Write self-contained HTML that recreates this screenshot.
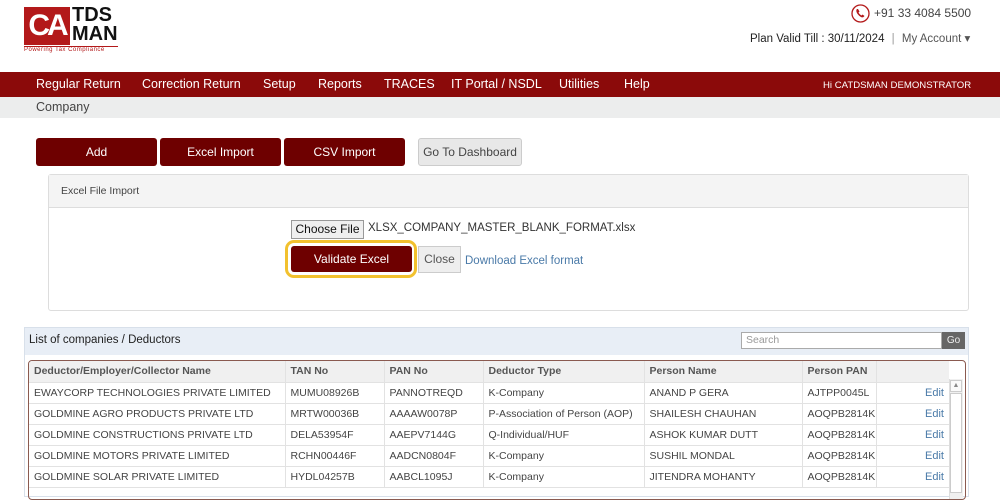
<!DOCTYPE html>
<html><head><style>
*{margin:0;padding:0;box-sizing:border-box}
body{width:1000px;height:485px;overflow:hidden;background:#fff;font-family:"Liberation Sans",sans-serif;position:relative;color:#333}
.a{position:absolute}
.btn{position:absolute;background:#6e0000;color:#fff;font-size:12px;text-align:center;border-radius:3px;line-height:28px}
.n{position:absolute;top:77px;font-size:12.5px;color:#fff;white-space:nowrap}
td{font-size:10.5px;color:#444;height:21px;border-bottom:1px solid #e2e2e2;border-right:1px solid #e2e2e2;padding-left:5px;white-space:nowrap}
</style></head><body>
<!-- logo -->
<div class="a" style="left:24px;top:7px;width:46px;height:38px;background:#b3191a;color:#fff;font-size:30px;font-weight:bold;line-height:38px;text-align:center;letter-spacing:-3px">CA</div>
<div class="a" style="left:72px;top:6px;font-size:20px;font-weight:bold;line-height:19px;color:#111">TDS<br>MAN</div>
<div class="a" style="left:24px;top:46px;width:94px;border-top:1px solid #b3191a"></div>
<div class="a" style="left:24px;top:47px;font-size:6px;color:#b3191a;letter-spacing:.5px">Powering Tax Compliance</div>
<!-- top right -->
<svg class="a" style="left:851px;top:4px" width="19" height="19" viewBox="0 0 19 19"><circle cx="9.5" cy="9.5" r="8.5" fill="none" stroke="#b3191a" stroke-width="1.3"/><path d="M6 5c-1 1-1 3 1 5.5s4.5 3.5 5.5 2.5l1-1-2-1.5-1 1c-1-.5-2.5-2-3-3l1-1L7 5z" fill="#b3191a"/></svg>
<div class="a" style="left:874px;top:6px;font-size:12px;color:#444">+91 33 4084 5500</div>
<div class="a" style="left:750px;top:31px;font-size:11.5px;color:#222;white-space:nowrap">Plan Valid Till : 30/11/2024 <span style="color:#999;margin:0 4px">|</span> <span style="color:#555">My Account ▾</span></div>
<!-- nav -->
<div class="a" style="left:0;top:72px;width:1000px;height:25px;background:#8b0a0a"></div>
<div class="n" style="left:36px">Regular Return</div>
<div class="n" style="left:142px">Correction Return</div>
<div class="n" style="left:263px">Setup</div>
<div class="n" style="left:318px">Reports</div>
<div class="n" style="left:384px">TRACES</div>
<div class="n" style="left:451px">IT Portal / NSDL</div>
<div class="n" style="left:559px">Utilities</div>
<div class="n" style="left:624px">Help</div>
<div class="a" style="left:823px;top:80px;font-size:9.6px;color:#fff;white-space:nowrap">Hi CATDSMAN DEMONSTRATOR</div>
<div class="a" style="left:0;top:97px;width:1000px;height:21px;background:#eceded"></div>
<div class="a" style="left:36px;top:100px;font-size:12.5px;color:#444">Company</div>
<!-- buttons -->
<div class="btn" style="left:36px;top:138px;width:121px">Add</div>
<div class="btn" style="left:160px;top:138px;width:121px">Excel Import</div>
<div class="btn" style="left:284px;top:138px;width:121px">CSV Import</div>
<div class="btn" style="left:418px;top:138px;width:104px;background:#e8e8e8;color:#444;border:1px solid #ccc;line-height:26px">Go To Dashboard</div>
<!-- import panel -->
<div class="a" style="left:48px;top:174px;width:921px;height:137px;border:1px solid #ddd;border-radius:3px"></div>
<div class="a" style="left:49px;top:175px;width:919px;height:33px;background:#f4f4f4;border-bottom:1px solid #ddd"></div>
<div class="a" style="left:61px;top:185px;font-size:10.5px;color:#444">Excel File Import</div>
<div class="a" style="left:291px;top:220px;width:73px;height:19px;border:1px solid #999;background:#efefef;font-size:12px;text-align:center;line-height:17px;color:#111">Choose File</div>
<div class="a" style="left:368px;top:222px;font-size:11.5px;color:#333">XLSX_COMPANY_MASTER_BLANK_FORMAT.xlsx</div>
<div class="a" style="left:285px;top:240px;width:132px;height:38px;border:3px solid #f2c12e;border-radius:9px"></div>
<div class="btn" style="left:291px;top:246px;width:121px;height:26px;line-height:26px">Validate Excel</div>
<div class="a" style="left:418px;top:246px;width:43px;height:27px;background:#eee;border:1px solid #ccc;font-size:12px;text-align:center;line-height:25px;color:#555">Close</div>
<div class="a" style="left:465px;top:255px;font-size:11.5px;color:#4a7aa8">Download Excel format</div>
<!-- list panel -->
<div class="a" style="left:24px;top:327px;width:945px;height:170px;border:1px solid #d8e0ea"></div>
<div class="a" style="left:25px;top:328px;width:943px;height:27px;background:#e8eef6"></div>
<div class="a" style="left:29px;top:334px;font-size:11.5px;color:#222">List of companies / Deductors</div>
<div class="a" style="left:741px;top:332px;width:201px;height:17px;border:1px solid #aaa;background:#fff;font-size:10.5px;color:#999;padding-left:4px;line-height:15px">Search</div>
<div class="a" style="left:942px;top:332px;width:23px;height:17px;background:#666;color:#eee;font-size:10px;text-align:center;line-height:17px">Go</div>
<div class="a" style="left:28px;top:360px;width:938px;height:140px;border:1px solid #8a5a50;border-radius:4px;overflow:hidden">
<table style="border-collapse:collapse;width:920px">
<tr style="background:#f0f0f0"><td style="width:256px;font-weight:bold;color:#555;height:19px">Deductor/Employer/Collector Name</td><td style="width:99px;font-weight:bold;color:#555">TAN No</td><td style="width:99px;font-weight:bold;color:#555">PAN No</td><td style="width:161px;font-weight:bold;color:#555">Deductor Type</td><td style="width:158px;font-weight:bold;color:#555">Person Name</td><td style="width:74px;font-weight:bold;color:#555">Person PAN</td><td style="border-right:none"></td></tr>
<tr><td>EWAYCORP TECHNOLOGIES PRIVATE LIMITED</td><td>MUMU08926B</td><td>PANNOTREQD</td><td>K-Company</td><td>ANAND P GERA</td><td>AJTPP0045L</td><td style="text-align:right;padding-right:5px;color:#4a7aa8;font-size:11px;border-right:none">Edit</td></tr>
<tr><td>GOLDMINE AGRO PRODUCTS PRIVATE LTD</td><td>MRTW00036B</td><td>AAAAW0078P</td><td>P-Association of Person (AOP)</td><td>SHAILESH CHAUHAN</td><td>AOQPB2814K</td><td style="text-align:right;padding-right:5px;color:#4a7aa8;font-size:11px;border-right:none">Edit</td></tr>
<tr><td>GOLDMINE CONSTRUCTIONS PRIVATE LTD</td><td>DELA53954F</td><td>AAEPV7144G</td><td>Q-Individual/HUF</td><td>ASHOK KUMAR DUTT</td><td>AOQPB2814K</td><td style="text-align:right;padding-right:5px;color:#4a7aa8;font-size:11px;border-right:none">Edit</td></tr>
<tr><td>GOLDMINE MOTORS PRIVATE LIMITED</td><td>RCHN00446F</td><td>AADCN0804F</td><td>K-Company</td><td>SUSHIL MONDAL</td><td>AOQPB2814K</td><td style="text-align:right;padding-right:5px;color:#4a7aa8;font-size:11px;border-right:none">Edit</td></tr>
<tr><td>GOLDMINE SOLAR PRIVATE LIMITED</td><td>HYDL04257B</td><td>AABCL1095J</td><td>K-Company</td><td>JITENDRA MOHANTY</td><td>AOQPB2814K</td><td style="text-align:right;padding-right:5px;color:#4a7aa8;font-size:11px;border-right:none">Edit</td></tr>
</table>
<div class="a" style="left:920px;top:18px;width:14px;height:122px;background:#f0f0f0;border-left:1px solid #ddd"></div>
<div class="a" style="left:921px;top:19px;width:12px;height:12px;border:1px solid #ccc;background:#fafafa;font-size:7px;color:#888;text-align:center;line-height:10px">▲</div>
<div class="a" style="left:921px;top:32px;width:12px;height:100px;border:1px solid #ccc;background:#fff"></div>
</div>
</body></html>
